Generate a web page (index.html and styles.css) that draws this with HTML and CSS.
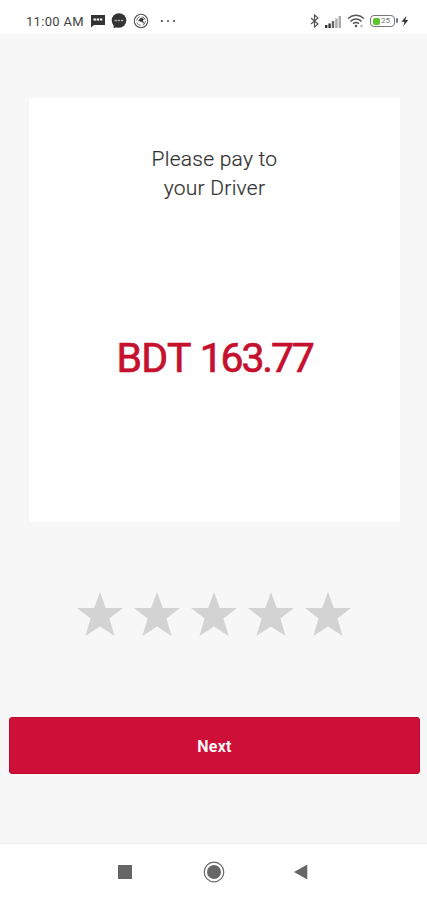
FILE: index.html
```html
<!DOCTYPE html>
<html lang="en">
<head>
    <meta charset="UTF-8">
    <meta name="viewport" content="width=device-width, initial-scale=1.0">
    <title>Payment</title>
    <link rel="stylesheet" href="styles.css">
</head>
<body>
    <div class="status-bar">
        <div class="status-left">
            <span class="clock">11:00 AM</span>
            <svg class="icon-message" width="16" height="14" viewBox="0 0 16 14">
                <path d="M1 1h14v10H4l-3 2.5z" fill="#333"/>
                <path d="M3.5 5.5h9" stroke="#fff" stroke-width="2" stroke-dasharray="2.4 .8"/>
            </svg>
            <svg class="icon-chat" width="16" height="16" viewBox="0 0 16 16">
                <circle cx="8" cy="7.5" r="7.3" fill="#333"/>
                <path d="M3 11l-.5 4 5-1z" fill="#333"/>
                <path d="M3.5 7.5h9" stroke="#aaa" stroke-width="1.4" stroke-dasharray="2.4 .8"/>
            </svg>
            <svg class="icon-app" width="16" height="16" viewBox="0 0 16 16">
                <circle cx="8" cy="8" r="6.7" fill="none" stroke="#555" stroke-width="1.1"/>
                <circle cx="8" cy="8" r="4.4" fill="none" stroke="#777" stroke-width="1" stroke-dasharray="5 2"/>
                <path d="M5 8l3-3.4 3 1.5-1.2 2L12 11.5 8.5 8.7z" fill="#333"/>
            </svg>
            <svg class="icon-more" width="16" height="4" viewBox="0 0 16 4">
                <circle cx="1.8" cy="2" r="1" fill="#333"/>
                <circle cx="8" cy="2" r="1" fill="#555"/>
                <circle cx="14" cy="2" r="1" fill="#333"/>
            </svg>
        </div>
        <div class="status-right">
            <svg class="icon-bluetooth" width="10" height="14" viewBox="0 0 10 14">
                <path d="M1 4l7 6-3.5 3V1L8 4l-7 6" fill="none" stroke="#555" stroke-width="1.2"/>
            </svg>
            <svg class="icon-signal" width="18" height="13" viewBox="0 0 18 13">
                <path d="M1 10h2.4v3H1zM4.4 8.5h2.4V13H4.4z" fill="#333"/>
                <path d="M7.8 6h2.4v7H7.8z" fill="#666"/>
                <path d="M11.2 3.5h2.4V13h-2.4zM14.6 1H17v12h-2.4z" fill="#aaa"/>
            </svg>
            <svg class="icon-wifi" width="18" height="14" viewBox="0 0 18 14">
                <path d="M1 4.5Q9-1.8 17 4.5M3.5 7.3Q9 2.8 14.5 7.3M6 9.7Q9 7.3 12 9.7" fill="none" stroke="#555" stroke-width="1.5"/>
                <circle cx="9" cy="12" r="1.3" fill="#555"/>
                <circle cx="14.5" cy="12" r="1" fill="none" stroke="#999" stroke-width=".7"/>
            </svg>
            <div class="battery">
                <span class="battery-level"></span>
                <span class="battery-text">25</span>
                <span class="battery-tip"></span>
            </div>
            <svg class="icon-bolt" width="8" height="12" viewBox="0 0 8 12">
                <path d="M5.5.8L.5 6.8h3L2.3 11.300l5-6.200H4.300z" fill="#333"/>
            </svg>
        </div>
    </div>

    <div class="content">
        <div class="card">
            <div class="card-title">Please pay to<br>your Driver</div>
            <div class="amount">BDT <span class="amount-value">163.77</span></div>
        </div>
        <div class="rating">
            <svg class="star" viewBox="0 0 46 44"><path d="M23 0l5.800 16H46L32.400 26.500 37.600 44 23 34.500 8.400 44l5.200-17.500L0 16h17.200z"/></svg>
            <svg class="star" viewBox="0 0 46 44"><path d="M23 0l5.800 16H46L32.400 26.500 37.600 44 23 34.500 8.400 44l5.200-17.500L0 16h17.200z"/></svg>
            <svg class="star" viewBox="0 0 46 44"><path d="M23 0l5.800 16H46L32.400 26.500 37.600 44 23 34.500 8.400 44l5.200-17.500L0 16h17.200z"/></svg>
            <svg class="star" viewBox="0 0 46 44"><path d="M23 0l5.800 16H46L32.400 26.500 37.600 44 23 34.500 8.400 44l5.200-17.500L0 16h17.200z"/></svg>
            <svg class="star" viewBox="0 0 46 44"><path d="M23 0l5.800 16H46L32.400 26.500 37.600 44 23 34.500 8.400 44l5.200-17.500L0 16h17.200z"/></svg>
        </div>
        <button class="next-button">Next</button>
    </div>

    <div class="nav-bar">
        <svg width="14" height="14" viewBox="0 0 14 14"><path d="M0 0h14v14H0z" fill="#666"/></svg>
        <svg width="22" height="22" viewBox="0 0 22 22">
            <circle cx="11" cy="11" r="9.800" fill="none" stroke="#666" stroke-width="1.200"/>
            <circle cx="11" cy="11" r="7" fill="#666"/>
        </svg>
        <svg class="nav-back" width="14" height="16" viewBox="0 0 14 16"><path d="M0 8L13.300.5v15z" fill="#666"/></svg>
    </div>
</body>
</html>
```

FILE: styles.css
```css
* {
    box-sizing: border-box;
}
body {
    margin: 0;
    height: 100vh;
    display: flex;
    flex-direction: column;
    font-family: Roboto, sans-serif;
    background-color: #f7f7f7;
    overflow: hidden;
}
.status-bar {
    height: 34px;
    padding: 8px 18px 0 26px;
    display: flex;
    justify-content: space-between;
    align-items: flex-start;
    background: white;
}
.status-left,
.status-right {
    height: 26px;
    display: flex;
    align-items: center;
}
.clock {
    width: 64px;
    color: #444;
    font-size: 13px;
    letter-spacing: 0.3px;
    white-space: nowrap;
}
.icon-chat {
    margin-left: 5px;
}
.icon-app {
    margin-left: 6px;
}
.icon-more {
    margin-left: 11px;
}
.icon-signal {
    margin-left: 4px;
}
.icon-wifi {
    margin-left: 5px;
}
.battery {
    position: relative;
    width: 25px;
    height: 12px;
    margin-left: 5px;
    padding: 1px;
    display: flex;
    align-items: center;
    border: 1.5px solid #777;
    border-radius: 4px;
}
.battery-level {
    width: 7px;
    height: 7px;
    margin-left: 1px;
    background: #5bc52f;
    border-radius: 2px;
}
.battery-text {
    margin-left: 1px;
    color: #777;
    font-size: 8px;
    line-height: 8px;
}
.battery-tip {
    position: absolute;
    right: -4px;
    top: 2px;
    width: 2px;
    height: 5px;
    background: #777;
    border-radius: 1px;
}
.icon-bolt {
    margin-left: 6px;
}
.content {
    flex: 1;
    display: flex;
    flex-direction: column;
    align-items: center;
    padding: 64px 7px 0 9px;
}
.card {
    width: 371px;
    height: 424px;
    padding-top: 47px;
    background: white;
    border-radius: 2px;
    text-align: center;
}
.card-title {
    color: #333;
    font-size: 21px;
    font-weight: 300;
    line-height: 29px;
    letter-spacing: 0.25px;
    -webkit-text-stroke: 0.2px #333;
}
.amount {
    margin-top: 131px;
    color: #c5102e;
    font-size: 41px;
    font-weight: 400;
    line-height: 48px;
    letter-spacing: -0.6px;
    -webkit-text-stroke: 0.7px #c5102e;
}
.amount-value {
    letter-spacing: -2.2px;
}
.rating {
    display: flex;
    gap: 11px;
    margin: 70px 2px 0 0;
}
.star {
    width: 46px;
    height: 44px;
    fill: #d3d3d3;
}
.next-button {
    width: 100%;
    height: 57px;
    margin-top: 81px;
    padding: 2px 0 0;
    background: #ce1039;
    color: #fff;
    border: 1px solid #c3062b;
    border-radius: 3px;
    font-family: Roboto, sans-serif;
    font-size: 16px;
    font-weight: 600;
    letter-spacing: 0.3px;
}
.nav-bar {
    height: 57px;
    padding: 0 0 0 118px;
    display: flex;
    align-items: center;
    background: white;
    border-top: 1px solid #eee;
}
.nav-bar svg {
    flex: none;
}
.nav-bar svg + svg {
    margin-left: 71px;
}
.nav-bar .nav-back {
    margin-left: 69px;
}
```
